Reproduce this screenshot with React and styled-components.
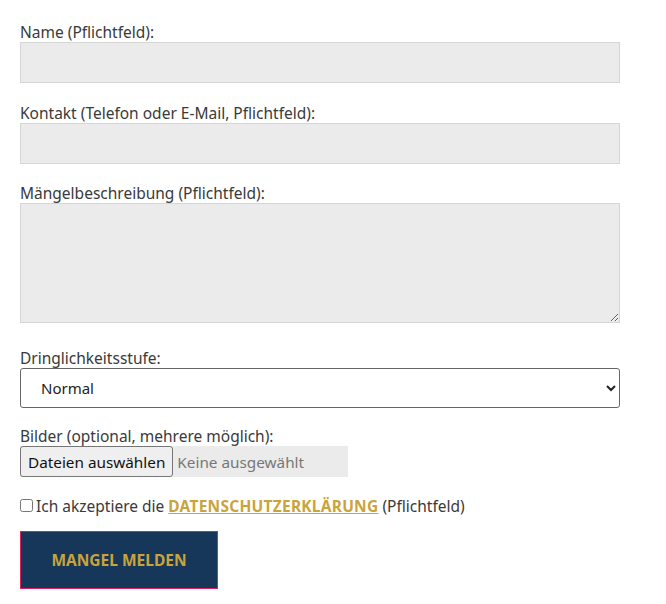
import React from "react";
import styled, { createGlobalStyle } from "styled-components";

// Mängelmeldung form

const GlobalStyle = createGlobalStyle`
  body {
    margin: 0;
    background: #ffffff;
    font-family: "Noto Sans", "Open Sans", sans-serif;
    color: #3a3a3a;
  }
`;

const Form = styled.form`
  display: flex;
  flex-direction: column;
  width: 600px;
  padding: 22px 20px 0 20px;
`;

const Field = styled.div`
  display: flex;
  flex-direction: column;
  margin-bottom: ${(p) => p.gap || 19}px;
`;

const Label = styled.label`
  font-size: 15.5px;
  line-height: 20px;
  color: #3a3a3a;
`;

const TextInput = styled.input`
  box-sizing: border-box;
  width: 600px;
  height: 41px;
  background: #ebebeb;
  border: 1px solid #d6d6d6;
  border-radius: 0;
  outline: none;
`;

const TextArea = styled.textarea`
  box-sizing: border-box;
  width: 600px;
  height: 120px;
  background: #ebebeb;
  border: 1px solid #d6d6d6;
  border-radius: 0;
  display: block;
  outline: none;
`;

const Select = styled.select`
  box-sizing: border-box;
  width: 600px;
  height: 40px;
  padding: 0 16px;
  font-family: "Noto Sans", sans-serif;
  font-size: 15px;
  color: #222;
  background: #fff;
  border: 1px solid #666;
  border-radius: 3px;
`;

const FileBox = styled.div`
  display: flex;
  align-items: center;
  width: 328px;
  height: 31px;
  background: #ebebeb;
`;

const FileButton = styled.span`
  box-sizing: border-box;
  display: flex;
  align-items: center;
  height: 31px;
  padding: 0 7px;
  font-size: 15.3px;
  color: #111;
  background: #efefef;
  border: 1px solid #767676;
  border-radius: 3px;
`;

const FileName = styled.span`
  font-size: 15.3px;
  color: #777;
  margin-left: 4px;
`;

const CheckRow = styled.div`
  display: flex;
  align-items: center;
  font-size: 15.5px;
  line-height: 20px;
  color: #3a3a3a;
  margin-bottom: 15px;

  input {
    margin: 0 3px 2px 0;
    width: 13px;
    height: 13px;
  }
`;

const Link = styled.a`
  color: #c9a43c;
  font-weight: 700;
  letter-spacing: 0.25px;
  text-decoration: underline;
  margin: 0 4px;
`;

const Submit = styled.button`
  box-sizing: border-box;
  width: 198px;
  height: 58px;
  background: #17375a;
  border: 1px solid #d8245c;
  color: #c9a43c;
  font-family: "Noto Sans", sans-serif;
  font-weight: 700;
  font-size: 15.5px;
  letter-spacing: 0;
  text-transform: uppercase;
`;

const App = () => {
  return (
    <>
      <GlobalStyle />
      <Form onSubmit={(e) => e.preventDefault()}>
        <Field gap={20}>
          <Label>Name (Pflichtfeld):</Label>
          <TextInput type="text" />
        </Field>
        <Field>
          <Label>Kontakt (Telefon oder E-Mail, Pflichtfeld):</Label>
          <TextInput type="text" />
        </Field>
        <Field gap={25}>
          <Label>Mängelbeschreibung (Pflichtfeld):</Label>
          <TextArea />
        </Field>
        <Field gap={18}>
          <Label>Dringlichkeitsstufe:</Label>
          <Select defaultValue="normal">
            <option value="normal">Normal</option>
            <option value="hoch">Hoch</option>
            <option value="dringend">Dringend</option>
          </Select>
        </Field>
        <Field gap={19}>
          <Label>Bilder (optional, mehrere möglich):</Label>
          <FileBox>
            <FileButton>Dateien auswählen</FileButton>
            <FileName>Keine ausgewählt</FileName>
          </FileBox>
        </Field>
        <CheckRow>
          <input type="checkbox" />
          Ich akzeptiere die
          <Link href="#">DATENSCHUTZERKLÄRUNG</Link>
          (Pflichtfeld)
        </CheckRow>
        <div>
          <Submit type="submit">Mangel melden</Submit>
        </div>
      </Form>
    </>
  );
};

export default App;
